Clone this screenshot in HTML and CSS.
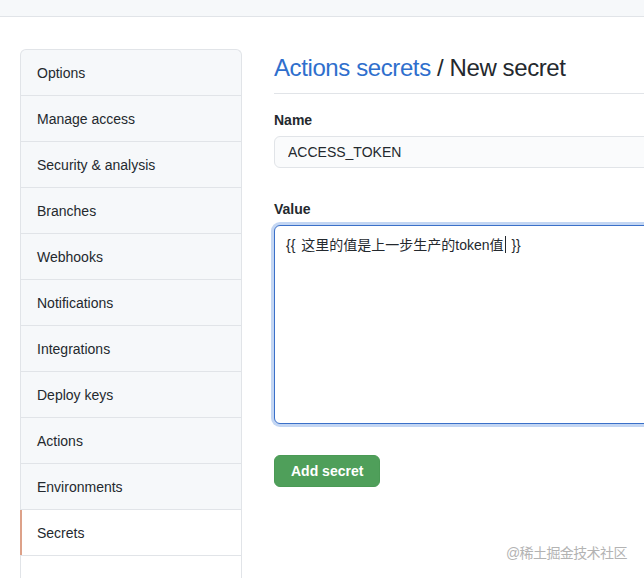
FILE: index.html
```html
<!DOCTYPE html>
<html lang="zh-CN">
<head>
<meta charset="utf-8">
<title>New secret</title>
<link rel="stylesheet" href="styles.css">
</head>
<body>
<div class="topbar"></div>
<div class="layout">
  <nav class="menu">
    <a class="menu-item first">Options</a>
    <a class="menu-item">Manage access</a>
    <a class="menu-item">Security &amp; analysis</a>
    <a class="menu-item">Branches</a>
    <a class="menu-item">Webhooks</a>
    <a class="menu-item">Notifications</a>
    <a class="menu-item">Integrations</a>
    <a class="menu-item">Deploy keys</a>
    <a class="menu-item">Actions</a>
    <a class="menu-item">Environments</a>
    <a class="menu-item selected">Secrets</a>
    <div class="menu-rest"></div>
  </nav>
  <main class="main">
    <div class="subhead">
      <h2 class="subhead-title"><a class="link">Actions secrets</a> / New secret</h2>
    </div>
    <div class="form-group">
      <label class="label">Name</label>
      <input class="input" type="text" value="ACCESS_TOKEN">
    </div>
    <div class="form-group">
      <label class="label">Value</label>
      <div class="textarea">{{ 这里的值是上一步生产的token值<span class="caret"></span> }}</div>
    </div>
    <button class="btn">Add secret</button>
  </main>
</div>
<div class="watermark">@稀土掘金技术社区</div>
</body>
</html>
```
FILE: styles.css
```css
html, body {
  margin: 0;
  padding: 0;
  overflow: hidden;
  height: 100%;
}
body {
  font-family: "Liberation Sans", "Noto Sans CJK SC", sans-serif;
  font-size: 14px;
  line-height: 1.5;
  color: #24292e;
  background: #fff;
  position: relative;
}
.topbar {
  height: 16px;
  background: #f6f8fa;
  border-bottom: 1px solid #e1e4e8;
}
.layout {
  display: flex;
  gap: 32px;
  padding: 32px 0 0 20px;
  width: 1100px;
}
.menu {
  width: 222px;
  flex: none;
  box-sizing: border-box;
  border: 1px solid #e1e4e8;
  border-bottom: none;
  border-radius: 6px 6px 0 0;
  background: #f6f8fa;
  display: flex;
  flex-direction: column;
}
.menu-item {
  display: flex;
  align-items: center;
  box-sizing: border-box;
  height: 46px;
  padding: 2px 16px 0;
  border-bottom: 1px solid #e1e4e8;
  color: #24292e;
}
.menu-item.first {
  border-radius: 6px 6px 0 0;
}
.menu-item.selected {
  background: #fff;
  box-shadow: inset 2px 0 0 #dda189;
  margin-left: -1px;
  padding-left: 17px;
}
.menu-rest {
  height: 40px;
  background: #fff;
}
.main {
  flex: 1;
  display: flex;
  flex-direction: column;
}
.subhead {
  border-bottom: 1px solid #e1e4e8;
  padding-bottom: 7px;
  margin-bottom: 16px;
}
.subhead-title {
  margin: 0;
  font-size: 24px;
  font-weight: 400;
  line-height: 36px;
  padding-top: 1px;
  letter-spacing: -0.4px;
}
.link {
  color: #2f6fcd;
}
.form-group {
  display: flex;
  flex-direction: column;
  margin-bottom: 31px;
}
.label {
  font-weight: bold;
  line-height: 21px;
  margin-bottom: 5px;
}
.input {
  box-sizing: border-box;
  height: 32px;
  padding: 5px 13px;
  font: inherit;
  color: #24292e;
  background: #fafbfc;
  border: 1px solid #e1e4e8;
  border-radius: 6px;
  outline: none;
}
.textarea {
  box-sizing: border-box;
  height: 199px;
  padding: 9px 12px 0 11px;
  line-height: 20px;
  word-spacing: 2px;
  border: 1px solid #3a70c9;
  border-radius: 6px;
  box-shadow: 0 0 0 3px #c3d6f3;
  background: #fff;
}
.caret {
  display: inline-block;
  width: 1px;
  height: 17px;
  background: #24292e;
  vertical-align: -3px;
  margin: 0 0 0 1px;
}
.btn {
  align-self: flex-start;
  height: 32px;
  padding: 0 16px;
  font: inherit;
  font-weight: bold;
  color: #fff;
  background: #4f9f5a;
  border: 1px solid #4a9a55;
  border-radius: 6px;
}
.watermark {
  position: absolute;
  left: 506px;
  top: 543px;
  font-size: 14px;
  line-height: 20px;
  color: #b3b3b3;
  letter-spacing: -0.6px;
}
```
